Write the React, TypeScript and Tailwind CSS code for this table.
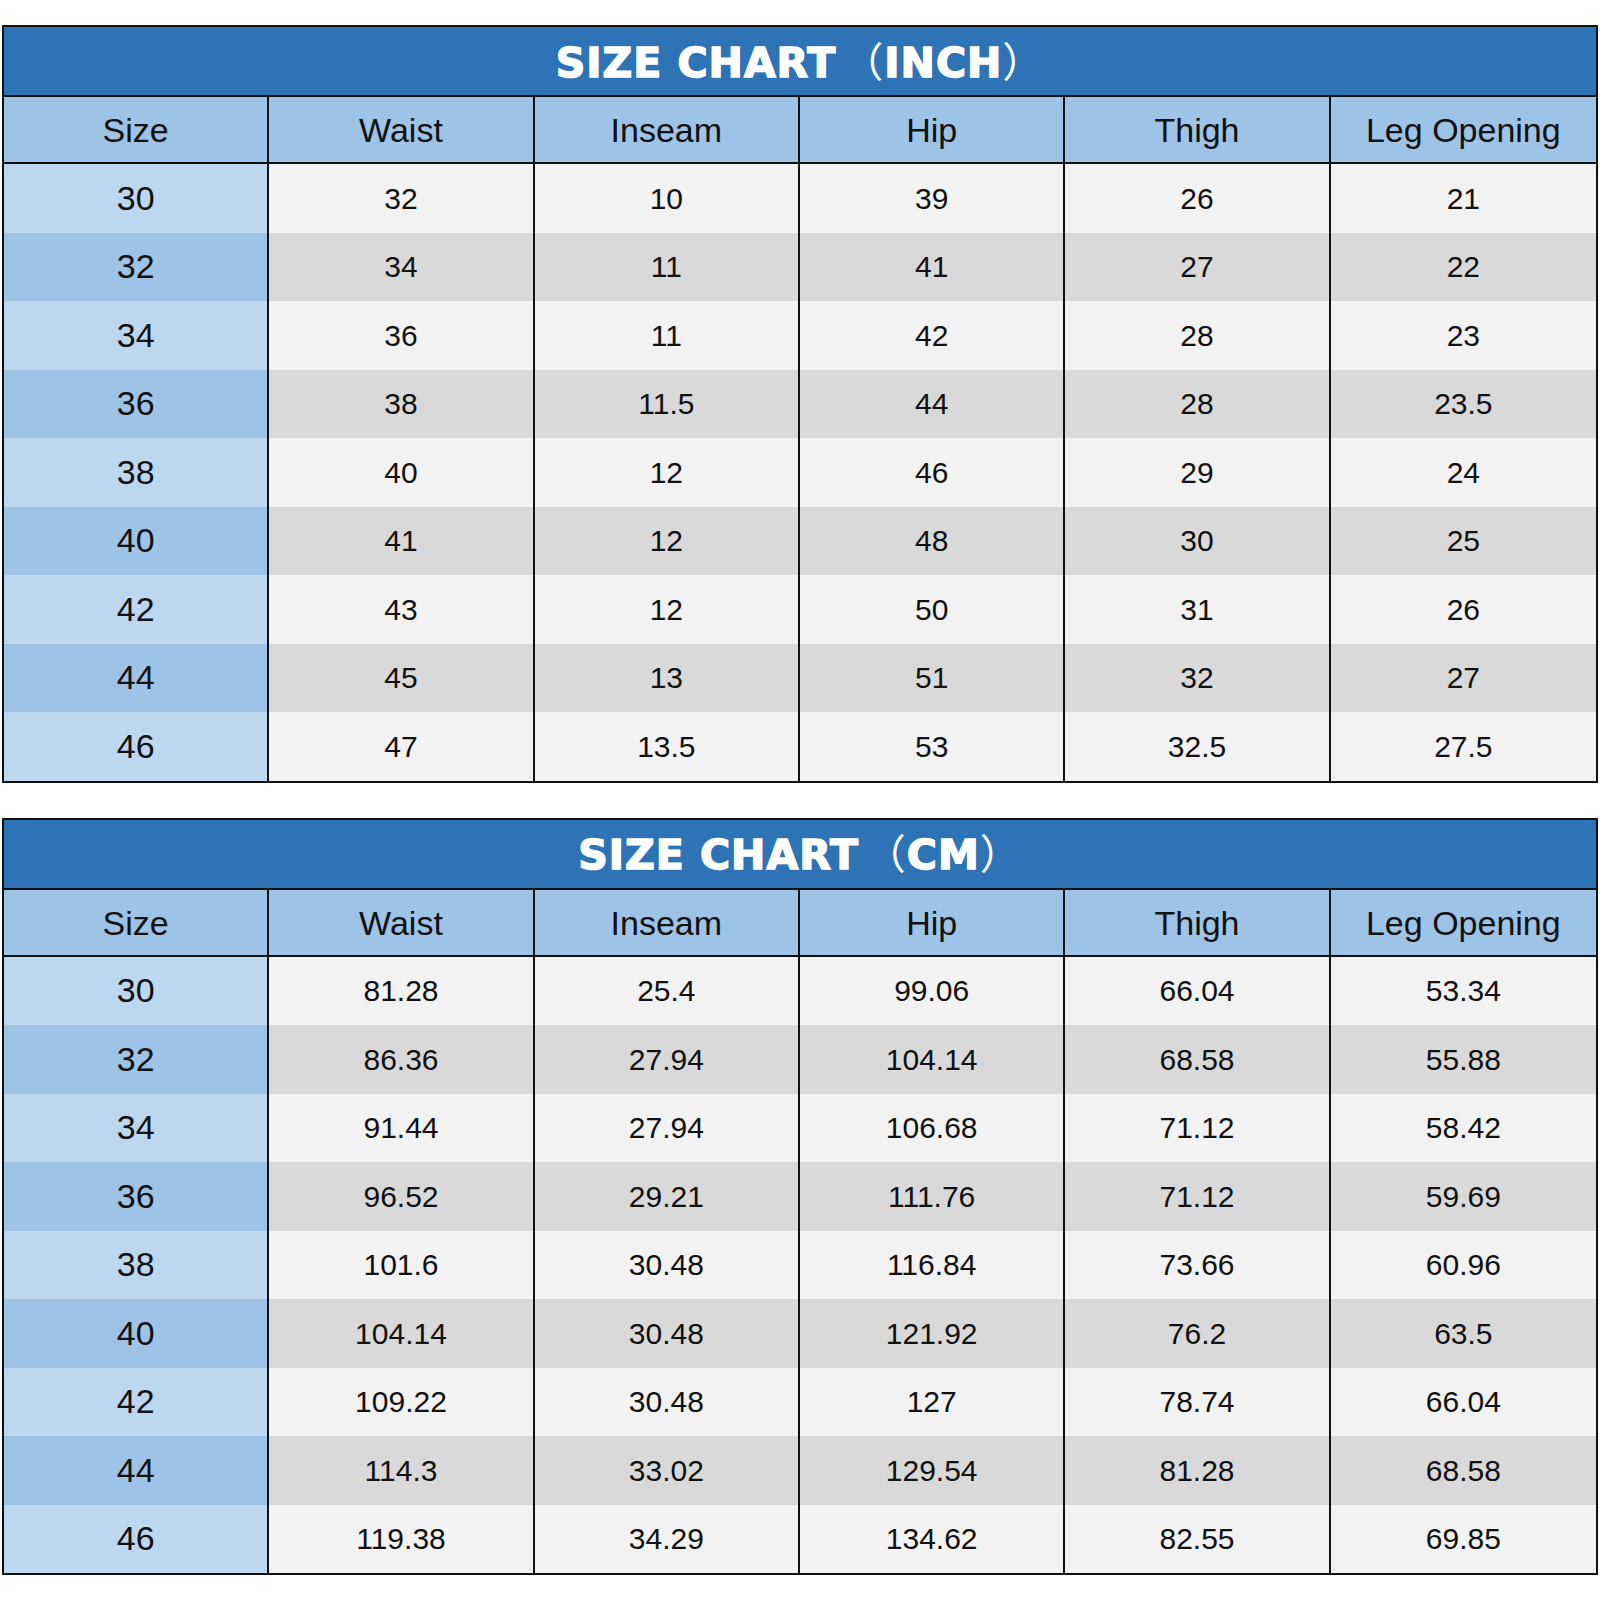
import React from "react";

const headers = ["Size", "Waist", "Inseam", "Hip", "Thigh", "Leg Opening"];

const inch: string[][] = [
  ["30", "32", "10", "39", "26", "21"],
  ["32", "34", "11", "41", "27", "22"],
  ["34", "36", "11", "42", "28", "23"],
  ["36", "38", "11.5", "44", "28", "23.5"],
  ["38", "40", "12", "46", "29", "24"],
  ["40", "41", "12", "48", "30", "25"],
  ["42", "43", "12", "50", "31", "26"],
  ["44", "45", "13", "51", "32", "27"],
  ["46", "47", "13.5", "53", "32.5", "27.5"],
];

const cm: string[][] = [
  ["30", "81.28", "25.4", "99.06", "66.04", "53.34"],
  ["32", "86.36", "27.94", "104.14", "68.58", "55.88"],
  ["34", "91.44", "27.94", "106.68", "71.12", "58.42"],
  ["36", "96.52", "29.21", "111.76", "71.12", "59.69"],
  ["38", "101.6", "30.48", "116.84", "73.66", "60.96"],
  ["40", "104.14", "30.48", "121.92", "76.2", "63.5"],
  ["42", "109.22", "30.48", "127", "78.74", "66.04"],
  ["44", "114.3", "33.02", "129.54", "81.28", "68.58"],
  ["46", "119.38", "34.29", "134.62", "82.55", "69.85"],
];

function Chart({ unit, rows }: { unit: string; rows: string[][] }) {
  return (
    <div className="ml-[2px] w-[1596px] border-2 border-[#111] font-['Liberation_Sans',Arial,sans-serif]">
      <div className="flex h-[68px] items-center justify-center bg-[#2e73b5] text-white">
        <span className="text-[41px] font-bold leading-none tracking-[1px] [-webkit-text-stroke:1.5px_white] font-['DejaVu_Sans',sans-serif]">
          SIZE CHART
          <span className="pl-[6px] font-normal [-webkit-text-stroke:0px] font-['Noto_Sans_CJK_SC',sans-serif]">（</span>
          {unit}
          <span className="font-normal [-webkit-text-stroke:0px] font-['Noto_Sans_CJK_SC',sans-serif]">）</span>
        </span>
      </div>
      <div className="grid h-[69px] grid-cols-6 border-t-2 border-b-2 border-[#111] bg-[#9dc3e6]">
        {headers.map((h, i) => (
          <div
            key={h}
            className={`flex items-center justify-center pt-[2px] text-[34px] text-[#111] ${i < 5 ? "border-r-2 border-[#111]" : ""}`}
          >
            {h}
          </div>
        ))}
      </div>
      {rows.map((r, ri) => {
        const dark = ri % 2 === 1;
        return (
          <div key={ri} className="grid h-[68.5px] grid-cols-6">
            {r.map((c, ci) => (
              <div
                key={ci}
                className={`flex items-center justify-center text-[#111] ${
                  ci === 0
                    ? `text-[34px] ${dark ? "bg-[#9dc3e6]" : "bg-[#bdd7ee]"}`
                    : `text-[30px] ${dark ? "bg-[#d9d9d9]" : "bg-[#f2f2f2]"}`
                } ${ci < 5 ? "border-r-2 border-[#111]" : ""}`}
              >
                {c}
              </div>
            ))}
          </div>
        );
      })}
    </div>
  );
}

export default function App() {
  return (
    <div className="h-[1600px] w-[1600px] bg-white pt-[25px]">
      <Chart unit="INCH" rows={inch} />
      <div className="h-[35px]" />
      <Chart unit="CM" rows={cm} />
    </div>
  );
}
